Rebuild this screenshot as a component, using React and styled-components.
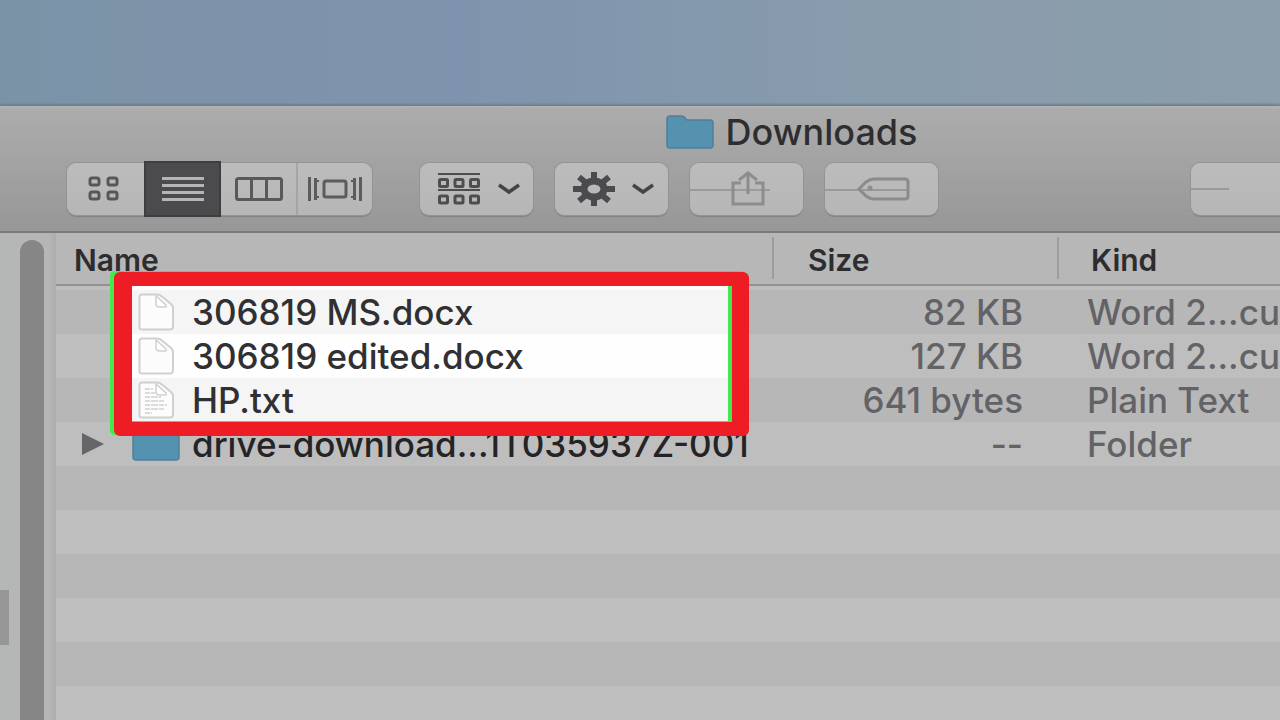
import React, { useState } from 'react'
import styled, { createGlobalStyle } from 'styled-components';

const files = [
    { name: '306819 MS.docx', size: '82 KB', kind: 'Word 2...cument', icon: 'doc' },
    { name: '306819 edited.docx', size: '127 KB', kind: 'Word 2...cument', icon: 'doc' },
    { name: 'HP.txt', size: '641 bytes', kind: 'Plain Text', icon: 'text' },
    { name: 'drive-download...1T035937Z-001', size: '--', kind: 'Folder', icon: 'folder' },
]

const views = [
    { id: 'icons', label: 'Icon view', Icon: GridIcon, width: 77 },
    { id: 'list', label: 'List view', Icon: ListIcon, width: 77 },
    { id: 'columns', label: 'Column view', Icon: ColumnsIcon, width: 75 },
    { id: 'flow', label: 'Cover flow view', Icon: FlowIcon, width: 76 },
]

function GridIcon() {
    return (
        <svg width="36" height="26" viewBox="0 0 36 26" fill="none" stroke="#75757a" strokeWidth="3">
            <rect x="2" y="2" width="9" height="7" rx="2" />
            <rect x="20" y="2" width="9" height="7" rx="2" />
            <rect x="2" y="16" width="9" height="7" rx="2" />
            <rect x="20" y="16" width="9" height="7" rx="2" />
        </svg>
    )
}

function ListIcon() {
    return (
        <svg width="42" height="26" viewBox="0 0 42 26" stroke="#f2f2f2" strokeWidth="3">
            <path d="M0 2.5H42M0 9.5H42M0 16.5H42M0 23.5H42" />
        </svg>
    )
}

function ColumnsIcon() {
    return (
        <svg width="48" height="24" viewBox="0 0 48 24" fill="none" stroke="#77777b" strokeWidth="3">
            <rect x="1.5" y="1.5" width="45" height="21" rx="2" />
            <path d="M16.5 2V22M31.5 2V22" />
        </svg>
    )
}

function FlowIcon() {
    return (
        <svg width="56" height="24" viewBox="0 0 56 24" fill="none" stroke="#7b7b7f" strokeWidth="3">
            <rect x="17" y="4" width="22" height="16" rx="2" />
            <path d="M2.5 0V24M53.5 0V24" />
            <path d="M8.5 1V23M47.5 1V23" />
            <path d="M10 4H12M10 20H12M44 4H46M44 20H46" strokeWidth="2" />
        </svg>
    )
}

function Chevron() {
    return (
        <svg width="24" height="12" viewBox="0 0 24 12" fill="none" stroke="#5c5c60" strokeWidth="3.5">
            <path d="M2 2L12 9L22 2" />
        </svg>
    )
}

function ArrangeIcon() {
    return (
        <svg width="44" height="34" viewBox="0 0 44 34" fill="none" stroke="#69696d" strokeWidth="3">
            <path d="M1 2H43M1 18H43" strokeWidth="2" />
            <rect x="2.5" y="7.5" width="8" height="7" rx="1" />
            <rect x="18" y="7.5" width="8" height="7" rx="1" />
            <rect x="33.5" y="7.5" width="8" height="7" rx="1" />
            <rect x="2.5" y="24" width="8" height="7" rx="1" />
            <rect x="18" y="24" width="8" height="7" rx="1" />
            <rect x="33.5" y="24" width="8" height="7" rx="1" />
        </svg>
    )
}

function GearIcon() {
    return (
        <svg width="42" height="34" viewBox="-21 -17 42 34" fill="none" stroke="#65656a">
            <ellipse rx="10" ry="8" strokeWidth="7" />
            <path d="M-21 0H-12M12 0H21M0 -17V-10M0 10V17M-15 -12L-9 -7M15 12L9 7M15 -12L9 -7M-15 12L-9 7" strokeWidth="6" />
        </svg>
    )
}

function ShareIcon() {
    return (
        <svg width="112" height="50" viewBox="0 0 112 50" fill="none" stroke="#bcbcbc" strokeWidth="3">
            <path d="M0 26H80" stroke="#cfcfcf" strokeWidth="2" />
            <path d="M51 19H43V40H73V19H65M58 30V9M49 16L58 9L67 16" />
        </svg>
    )
}

function TagIcon() {
    return (
        <svg width="112" height="50" viewBox="0 0 112 50" fill="none" stroke="#bababa" strokeWidth="3">
            <path d="M0 26H82" stroke="#cdcdcd" strokeWidth="2" />
            <path d="M34 25L41 18Q45 15 49 15H80Q83 15 83 18V32Q83 35 80 35H49Q45 35 41 32Z" />
            <circle cx="45" cy="24" r="1" />
        </svg>
    )
}

function FolderIcon() {
    return (
        <svg width="48" height="34" viewBox="0 0 48 34">
            <path d="M1 4Q1 1 4 1H15Q18 1 20 4L21 5H44Q47 5 47 8V30Q47 33 44 33H4Q1 33 1 30Z" fill="#70c3ea" stroke="#6ba9cf" strokeWidth="1.5" />
        </svg>
    )
}

function FileIcon({ lines }) {
    return (
        <svg width="36" height="38" viewBox="0 0 36 38" fill="none" stroke="#d0d0d0">
            <path d="M4 1.5H19Q22 1.5 24 3.5L33 11Q35 13 35 15V33Q35 36.5 32 36.5H4Q1.5 36.5 1.5 34V4Q1.5 1.5 4 1.5Z" fill="#fcfcfc" strokeWidth="2" />
            <path d="M18 3V11Q18 14 22 14H27Q29 14 28 12Z" fill="#fff" strokeWidth="1.5" />
            {lines && <path d="M7 8H15M7 12H17M7 16H23M7 20H27M7 24H29M7 28H27M7 32H14" strokeWidth="1.5" strokeDasharray="5 1 7 1" />}
        </svg>
    )
}

function App() {
    const [view, setView] = useState('list')

  return (
    <Desktop>
        <GlobalStyle />
        <FinderWindow>
            <TitleBar>
                <Title>
                    <FolderIcon />
                    <h1>Downloads</h1>
                </Title>
                <Toolbar>
                    <Segments>
                        {views.map(({ id, label, Icon, width }) => {
                            return <Segment
                                key={id}
                                $width={width}
                                $active={id === view}
                                aria-label={label}
                                onClick={() => setView(id)}
                            >
                                <Icon />
                            </Segment>
                        })}
                    </Segments>
                    <ToolButton aria-label="Arrange"><ArrangeIcon /><Chevron /></ToolButton>
                    <ToolButton aria-label="Actions"><GearIcon /><Chevron /></ToolButton>
                    <ToolButton aria-label="Share" $flush><ShareIcon /></ToolButton>
                    <ToolButton aria-label="Tags" $flush><TagIcon /></ToolButton>
                    <EdgeButton aria-label="More" $flush>
                        <svg width="38" height="2" viewBox="0 0 38 2"><path d="M0 1H38" stroke="#cdcdcd" strokeWidth="2" /></svg>
                    </EdgeButton>
                </Toolbar>
            </TitleBar>
            <Body>
                <Sidebar>
                    <SidebarItem />
                    <ScrollThumb />
                </Sidebar>
                <Pane>
                    <FileTable>
                        <colgroup>
                            <col />
                            <col className="size" />
                            <col className="kind" />
                        </colgroup>
                        <thead>
                            <tr>
                                <HeadCell $pad={18}>Name</HeadCell>
                                <HeadCell $pad={36} $divider>Size</HeadCell>
                                <HeadCell $pad={34} $divider>Kind</HeadCell>
                            </tr>
                        </thead>
                        <tbody>
                            {files.map((file) => {
                                return <Row key={file.name}>
                                    <td>
                                        <NameCell>
                                            <Disclosure>
                                                {file.icon === 'folder' && <button aria-label="Expand folder">
                                                    <svg width="22" height="22" viewBox="0 0 22 22"><path d="M0 0L22 11L0 22Z" fill="#88888b" /></svg>
                                                </button>}
                                            </Disclosure>
                                            <IconSlot>
                                                {file.icon === 'folder' ? <FolderIcon /> : <FileIcon lines={file.icon === 'text'} />}
                                            </IconSlot>
                                            <span>{file.name}</span>
                                        </NameCell>
                                    </td>
                                    <SizeCell>{file.size}</SizeCell>
                                    <KindCell>{file.kind}</KindCell>
                                </Row>
                            })}
                        </tbody>
                    </FileTable>
                    <EmptyRows />
                    <Highlight />
                </Pane>
            </Body>
        </FinderWindow>
    </Desktop>
  )
}

const GlobalStyle = createGlobalStyle`
    *, *::after{
        box-sizing: border-box;
    }
    body{
        margin: 0;
        font-family: Inter, "Liberation Sans", sans-serif;
        color: #303033;
    }
    button{
        border: 0;
        padding: 0;
        background: none;
    }
    svg{
        display: block;
        flex-shrink: 0;
    }
`;

const Desktop = styled.main`
    min-height: 100vh;
    display: flex;
    flex-direction: column;
    overflow: hidden;
    padding-top: 106px;
    background: linear-gradient(90deg, #a5c4df 0%, #a9c6e8 35%, #b7d1e6 70%, #bbd3e4 100%);
`;

const FinderWindow = styled.section`
    flex: 1;
    display: flex;
    flex-direction: column;
    box-shadow: 0 -2px 2px #8fa9c4;
`;

const TitleBar = styled.header`
    display: flex;
    flex-direction: column;
    gap: 9px;
    padding-bottom: 16px;
    border-top: 2px solid #ededed;
    border-bottom: 2px solid #a3a3a3;
    background: linear-gradient(#e6e6e6, #cacaca);
`;

const Title = styled.div`
    display: flex;
    align-items: center;
    gap: 12px;
    height: 46px;
    padding: 2px 0 0 52%;
    h1{
        margin: 0;
        font-size: 36px;
        line-height: 40px;
        font-weight: 500;
        color: #3e3e42;
    }
`;

const Toolbar = styled.div`
    display: flex;
    align-items: center;
    gap: 22px;
    height: 52px;
    padding-left: 67px;
`;

const Segments = styled.div`
    display: flex;
    align-items: center;
    height: 52px;
    margin-right: 26px;
    border-radius: 9px;
    background: linear-gradient(#fbfbfb, #f2f4f3);
    box-shadow: 0 0 0 1px #c5c5c5, 0 2px 1px #adadad;
`;

const Segment = styled.button`
    display: flex;
    align-items: center;
    justify-content: center;
    width: ${({ $width }) => $width}px;
    height: ${({ $active }) => $active ? 56 : 52}px;
    background: ${({ $active }) => $active ? '#656568' : 'none'};
    border: ${({ $active }) => $active ? '2px solid #535356' : '0'};
    &:last-child{
        border-left: 2px solid #dddddd;
    }
`;

const ToolButton = styled.button`
    display: flex;
    align-items: center;
    justify-content: ${({ $flush }) => $flush ? 'flex-start' : 'center'};
    gap: 16px;
    flex-shrink: 0;
    width: 113px;
    height: 52px;
    padding-left: ${({ $flush }) => $flush ? 0 : 4}px;
    border-radius: 9px;
    background: linear-gradient(#fbfbfb, #f2f4f3);
    box-shadow: 0 0 0 1px #c5c5c5, 0 2px 1px #adadad;
`;

const EdgeButton = styled(ToolButton)`
    width: 89px;
    margin-left: auto;
    border-radius: 9px 0 0 9px;
`;

const Body = styled.div`
    flex: 1;
    display: flex;
`;

const Sidebar = styled.aside`
    display: flex;
    justify-content: space-between;
    flex-shrink: 0;
    width: 56px;
    padding: 7px 12px 0 0;
    background: linear-gradient(90deg, #f1f4f3 49px, #e5e8e7 56px);
`;

const SidebarItem = styled.div`
    width: 9px;
    height: 55px;
    margin-top: 350px;
    background: #c8c8c8;
`;

const ScrollThumb = styled.div`
    width: 24px;
    border-radius: 12px 12px 0 0;
    background: #b3b3b3;
`;

const Pane = styled.div`
    position: relative;
    flex: 1;
    min-width: 0;
    display: flex;
    flex-direction: column;
`;

const FileTable = styled.table`
    width: 100%;
    table-layout: fixed;
    border-spacing: 0;
    .size{
        width: 285px;
    }
    .kind{
        width: 223px;
    }
    td{
        padding: 0;
    }
`;

const HeadCell = styled.th`
    height: 53px;
    padding: 2px 0 0 ${({ $pad }) => $pad}px;
    border-bottom: 2px solid #c3c3c3;
    background: ${({ $divider }) => $divider
        ? 'linear-gradient(#d2d2d2, #d2d2d2) 0 4px / 2px 42px no-repeat #f5f5f5'
        : '#f5f5f5'};
    text-align: left;
    font-size: 30px;
    line-height: 34px;
    font-weight: 600;
    color: #3c3c40;
`;

const Row = styled.tr`
    height: 44px;
    background: #fefefe;
    font-size: 35px;
    line-height: 40px;
    font-weight: 500;
    white-space: nowrap;
    &:nth-child(odd){
        background: #f5f5f5;
    }
    &:first-child td{
        border-top: 4px solid #fefefe;
    }
`;

const NameCell = styled.div`
    display: flex;
    align-items: center;
    height: 44px;
    padding-left: 26px;
    span{
        margin-left: 12px;
    }
`;

const Disclosure = styled.div`
    width: 50px;
    button{
        display: block;
    }
`;

const IconSlot = styled.div`
    display: flex;
    justify-content: center;
    width: 48px;
`;

const SizeCell = styled.td`
    text-align: right;
    color: #85858a;
    &&{
        padding-right: 34px;
    }
`;

const KindCell = styled.td`
    overflow: hidden;
    color: #85858a;
    &&{
        padding-left: 30px;
    }
`;

const EmptyRows = styled.div`
    flex: 1;
    background: repeating-linear-gradient(#f5f5f5 0 44px, #fefefe 44px 88px);
`;

/* marker frame over the first three names, everything outside it is dimmed */
const Highlight = styled.div`
    position: absolute;
    top: 38px;
    left: 54px;
    width: 636px;
    height: 164px;
    border: solid #46e850;
    border-width: 15px 18px 14px 22px;
    border-radius: 4px;
    box-shadow: 0 0 0 200vmax rgba(0, 0, 0, .25);
    pointer-events: none;
    &::after{
        content: "";
        position: absolute;
        top: -14px;
        left: -18px;
        width: 635px;
        height: 164px;
        border: solid #ee1c25;
        border-width: 14px 17px 14px 18px;
        border-radius: 6px;
    }
`;

export default App
